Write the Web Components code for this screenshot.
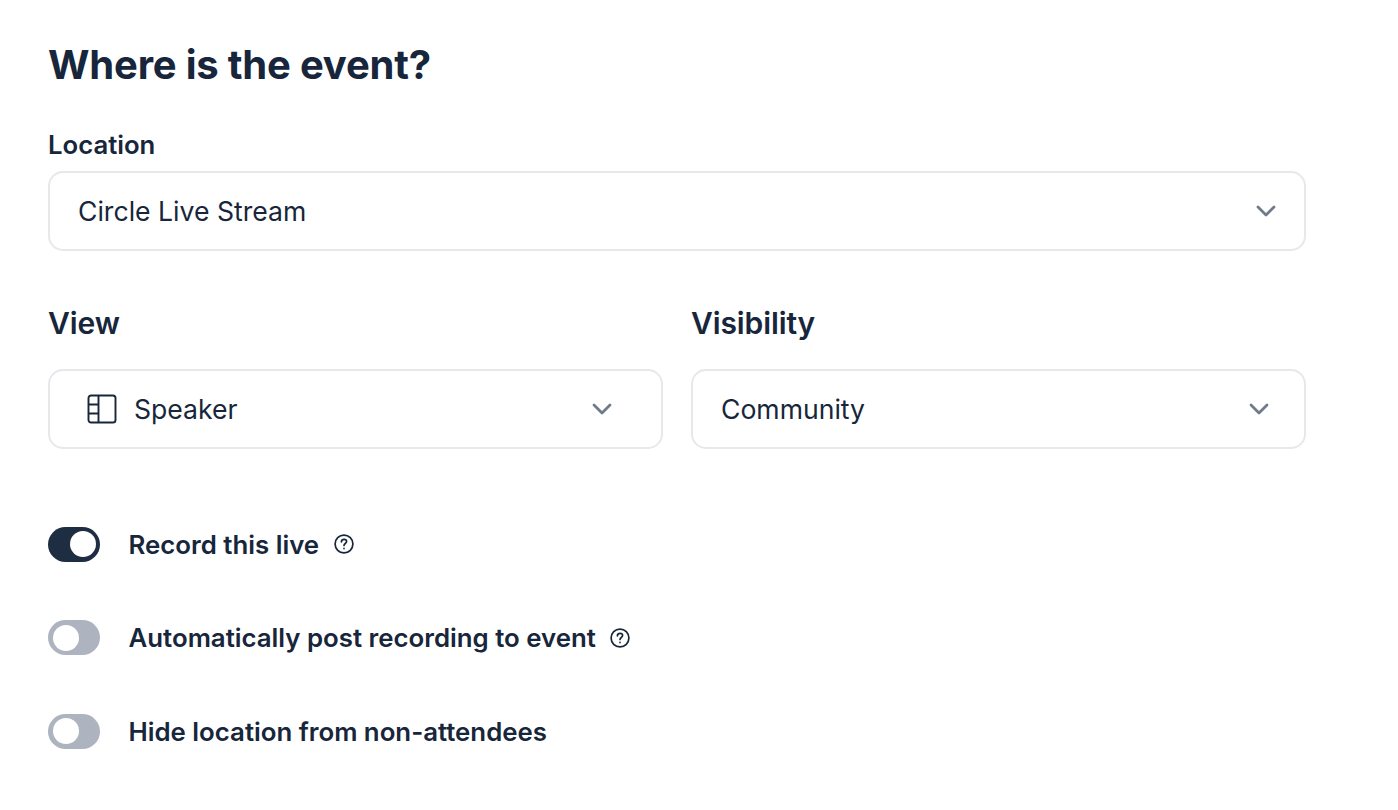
<!DOCTYPE html>
<html>
<head>
<meta charset="utf-8">
<style>
    html, body { margin: 0; background: #fff; }
    body { font-family: Inter, "Liberation Sans", sans-serif; color: #17263b; }
</style>
</head>
<body>
<event-form heading="Where is the event?">
    <form-field label="Location" size="small">
        <select-box arrow="28">Circle Live Stream</select-box>
    </form-field>
    <div slot="columns">
        <form-field label="View">
            <select-box inset="38" arrow="49">
                <svg slot="icon" width="30" height="30" viewBox="0 0 30 30" fill="none" stroke="#17263b" stroke-width="1.9" stroke-linejoin="round">
                    <rect x="1.5" y="1.5" width="27" height="27" rx="2.6"/>
                    <path d="M11.5 1.5V28.5M1.5 10.5H11.5M1.5 19.5H11.5"/>
                </svg>
                Speaker
            </select-box>
        </form-field>
    </div>
    <div slot="columns">
        <form-field label="Visibility">
            <select-box inset="29" arrow="35">Community</select-box>
        </form-field>
    </div>
    <toggle-row slot="toggles" checked help>Record this live</toggle-row>
    <toggle-row slot="toggles" help>Automatically post recording to event</toggle-row>
    <toggle-row slot="toggles">Hide location from non-attendees</toggle-row>
</event-form>

<script>
class EventForm extends HTMLElement {
    constructor() {
        super();
        this.attachShadow({ mode: "open" });
    }
    connectedCallback() {
        this.shadowRoot.innerHTML = `
            <style>
                :host { display: block; width: 1257.5px; padding: 41px 0 0 48px; }
                h1 { margin: 0 0 41px; font-size: 40px; line-height: 48px; font-weight: 700; letter-spacing: -0.2px; }
                .columns { display: grid; grid-template-columns: 1fr 1fr; gap: 28.5px; margin-top: 54.5px; }
                ::slotted([slot="columns"]) { min-width: 0; }
                .toggles { display: flex; flex-direction: column; gap: 58.5px; margin-top: 78px; }
            </style>
            <h1>${this.getAttribute("heading")}</h1>
            <slot></slot>
            <div class="columns"><slot name="columns"></slot></div>
            <div class="toggles"><slot name="toggles"></slot></div>
        `;
    }
}

class FormField extends HTMLElement {
    constructor() {
        super();
        this.attachShadow({ mode: "open" });
    }
    connectedCallback() {
        this.shadowRoot.innerHTML = `
            <style>
                :host { display: block; }
                .label { font-size: 30px; line-height: 36px; font-weight: 600; margin-bottom: 28px; letter-spacing: -0.1px; }
                :host([size="small"]) .label { font-size: 25.7px; line-height: 30px; margin-bottom: 11px; letter-spacing: 0; }
            </style>
            <div class="label">${this.getAttribute("label")}</div>
            <slot></slot>
        `;
    }
}

class SelectBox extends HTMLElement {
    constructor() {
        super();
        this.attachShadow({ mode: "open" });
    }
    connectedCallback() {
        const inset = this.getAttribute("inset") ?? "29";
        const arrow = this.getAttribute("arrow") ?? "28";
        this.shadowRoot.innerHTML = `
            <style>
                :host { display: block; }
                .box {
                    display: flex;
                    align-items: center;
                    box-sizing: border-box;
                    height: 79.5px;
                    padding: 0 ${arrow}px 0 ${inset}px;
                    border: 2px solid #e6e8ec;
                    border-radius: 15px;
                    font-size: 26.6px;
                    color: #17263b;
                    background: #fff;
                }
                .text { flex: 1; display: flex; align-items: center; gap: 17px; margin-left: -1px; }
                .chev { display: block; }
            </style>
            <div class="box">
                <div class="text"><slot name="icon"></slot><slot></slot></div>
                <svg class="chev" width="20" height="12" viewBox="0 0 20 12" fill="none" stroke="#6f7a8b" stroke-width="2.8" stroke-linecap="round" stroke-linejoin="round">
                    <path d="M2 2l8 8 8-8"/>
                </svg>
            </div>
        `;
    }
}

class ToggleRow extends HTMLElement {
    constructor() {
        super();
        this.attachShadow({ mode: "open" });
    }
    connectedCallback() {
        const help = this.hasAttribute("help") ? `
            <svg class="help" width="20" height="20" viewBox="0 0 20 20" fill="none" stroke="#17263b" stroke-width="1.7" stroke-linecap="round">
                <circle cx="10" cy="10" r="8.9"/>
                <path d="M7.4 7.8c0-1.5 1.2-2.5 2.6-2.5s2.6 1 2.6 2.3c0 1.9-2.6 1.9-2.6 3.8"/>
                <path d="M10 14.4v.2"/>
            </svg>` : "";
        this.shadowRoot.innerHTML = `
            <style>
                :host { display: flex; align-items: center; height: 35px; }
                .track {
                    width: 52px; height: 35px; flex: none; box-sizing: border-box;
                    border-radius: 17.5px; background: #aeb4bf; padding: 4.5px;
                    display: flex; justify-content: flex-start;
                }
                :host([checked]) .track { background: #1f2d42; justify-content: flex-end; }
                .knob { width: 26px; height: 26px; border-radius: 50%; background: #fff; }
                .label { margin-left: 28.5px; font-size: 25.8px; font-weight: 600; line-height: 35px; color: #17263b; }
                .help { margin-left: 14.5px; }
            </style>
            <div class="track"><div class="knob"></div></div>
            <span class="label"><slot></slot></span>
            ${help}
        `;
    }
}

customElements.define("event-form", EventForm);
customElements.define("form-field", FormField);
customElements.define("select-box", SelectBox);
customElements.define("toggle-row", ToggleRow);
</script>
</body>
</html>
